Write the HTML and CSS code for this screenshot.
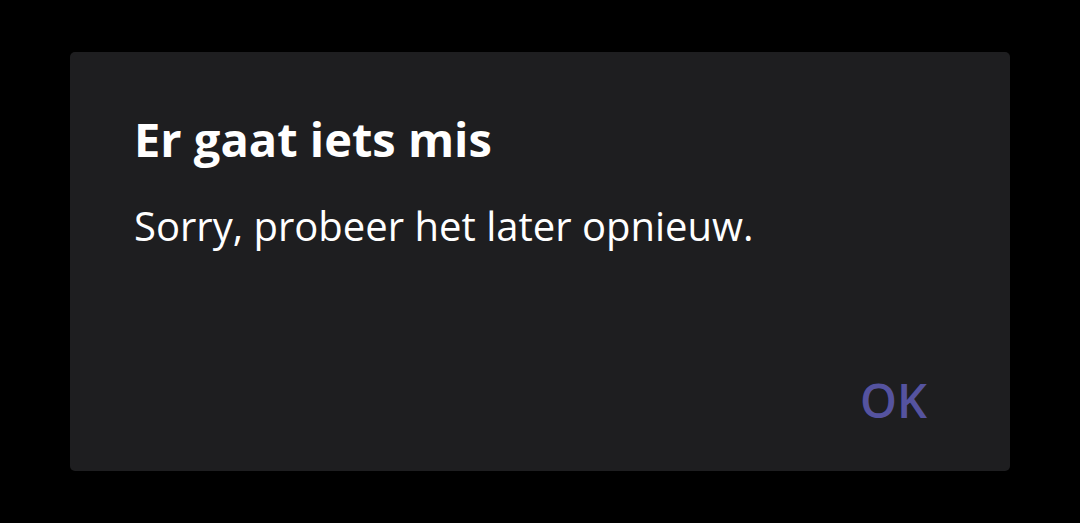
FILE: index.html
```html
<!DOCTYPE html>
<html lang="nl">
<head>
  <meta charset="UTF-8">
  <meta name="viewport" content="width=device-width, initial-scale=1.0">
  <title>Er gaat iets mis</title>
  <link rel="stylesheet" href="styles.css">
</head>
<body>
  <div class="dialog">
    <h2 class="dialog-title">Er gaat iets mis</h2>
    <p class="dialog-text">Sorry, probeer het later opnieuw.</p>
    <div class="dialog-actions">
      <button class="dialog-btn">OK</button>
    </div>
  </div>
</body>
</html>
```

FILE: styles.css
```css
html, body {
    margin: 0;
    height: 100%;
    background: #000;
}

body {
    font-family: "Open Sans", Arial, sans-serif;
    color: #fff;
    padding: 52px 70px;
    box-sizing: border-box;
}

.dialog {
    height: 419px;
    background: #1e1e20;
    border-radius: 5px;
    padding: 0 83px 0 64px;
    display: flex;
    flex-direction: column;
    box-sizing: border-box;
}

.dialog-title {
    margin: 59px 0 0;
    font-size: 47px;
    font-weight: 700;
    line-height: 56px;
}

.dialog-text {
    margin: 35px 0 0;
    font-size: 40px;
    font-weight: 400;
    line-height: 48px;
}

.dialog-actions {
    margin-top: auto;
    margin-bottom: 41px;
    display: flex;
    justify-content: flex-end;
}

.dialog-btn {
    background: none;
    border: none;
    padding: 0;
    font-family: inherit;
    font-size: 47px;
    font-weight: 600;
    line-height: 60px;
    color: #55539f;
    cursor: pointer;
}
```
